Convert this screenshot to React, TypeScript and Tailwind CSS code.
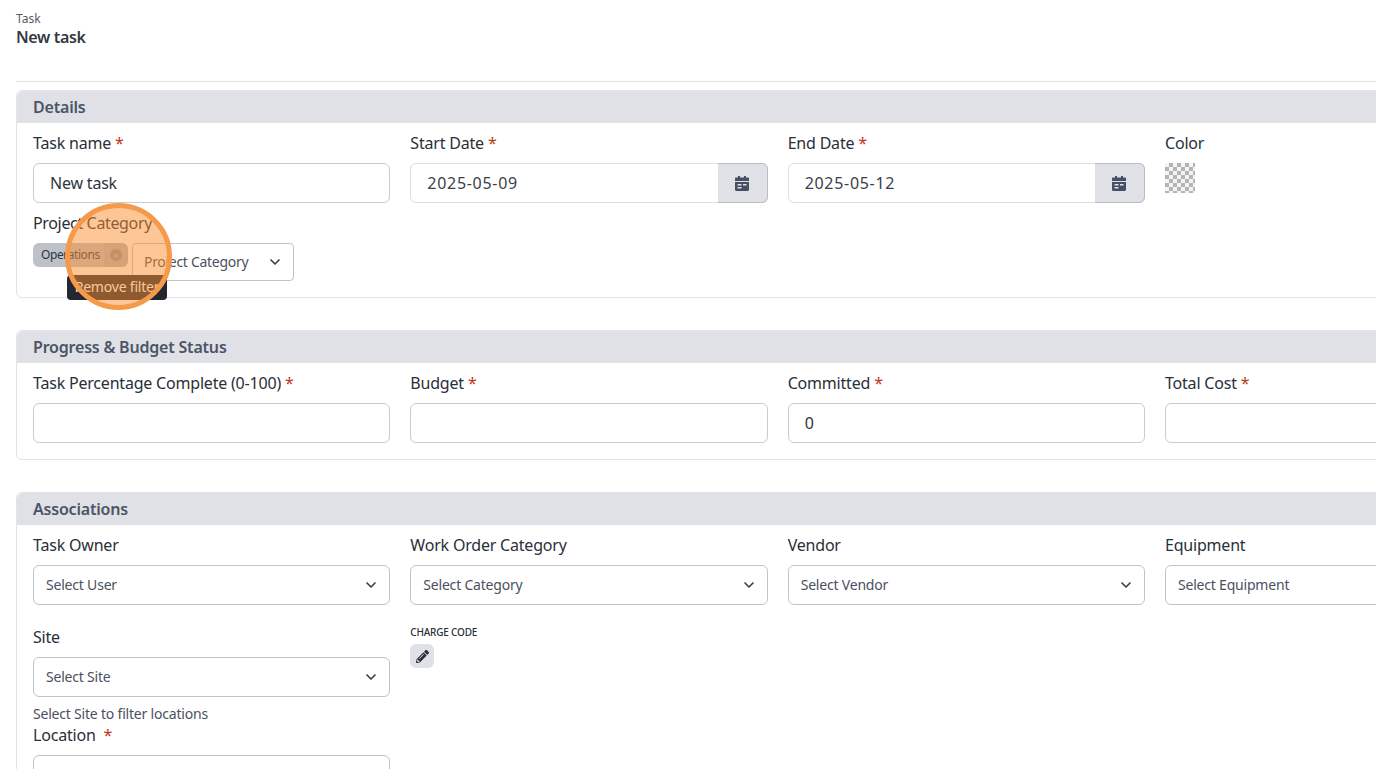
import { ChevronDown } from 'lucide-react';
import { FaPencilAlt } from 'react-icons/fa';

function CalendarIcon() {
  return (
    <svg viewBox="0 0 14 15" className="h-[15px] w-[14px] text-[#475063]" fill="currentColor">
      <rect x="3" y="0" width="2" height="3" />
      <rect x="9" y="0" width="2" height="3" />
      <path d="M1 1.5h12a1 1 0 0 1 1 1V5H0V2.500a1 1 0 0 1 1-1z" />
      <path
        fillRule="evenodd"
        d="M0 6h14v7.500a1.500 1.500 0 0 1-1.500 1.500h-11A1.500 1.500 0 0 1 0 13.500V6zm2.500 2v1.500h4V8h-4zm5.500 0v1.500h3.500V8H8zm-5.500 3v1.500h4V11h-4z"
      />
    </svg>
  );
}

function Label({ text, required, wide }: { text: string; required?: boolean; wide?: boolean }) {
  return (
    <div className="h-5 text-[16px] leading-5 text-[#2a2f38]">
      {text}
      {required && <span className={wide ? 'ml-2 text-[#b5391c]' : 'ml-1 text-[#b5391c]'}>*</span>}
    </div>
  );
}

function TextField({ label, value, required }: { label: string; value?: string; required?: boolean }) {
  return (
    <div>
      <Label text={label} required={required} />
      <div className="mt-2.5 flex h-10 items-center rounded-md border border-[#c9ccd1] bg-white px-4 text-[16px] text-[#2f343d]">
        {value}
      </div>
    </div>
  );
}

function DateField({ label, value }: { label: string; value: string }) {
  return (
    <div>
      <Label text={label} required />
      <div className="mt-2.5 flex h-10 rounded-md border border-[#dcdee2] bg-white">
        <div className="flex flex-1 items-center px-4 text-[16px] tracking-[0.7px] text-[#3a3f48]">{value}</div>
        <div className="-my-px -mr-px flex w-[50px] items-center justify-center rounded-r-md border border-l-0 border-[#b9bcc3] bg-[#dfe1e6]">
          <CalendarIcon />
        </div>
      </div>
    </div>
  );
}

function SelectField({ label, placeholder, required }: { label: string; placeholder: string; required?: boolean }) {
  return (
    <div>
      <Label text={label} required={required} />
      <div className="mt-2.5 flex h-10 items-center justify-between rounded-md border border-[#c0c3c9] bg-white pl-3 pr-2.5 text-[14px] text-[#4b5160]">
        <span className="-mt-0.5">{placeholder}</span>
        <ChevronDown className="h-4 w-4 text-[#3a3f48]" strokeWidth={2.5} />
      </div>
    </div>
  );
}

function Card({ title, children }: { title: string; children: React.ReactNode }) {
  return (
    <section className="rounded-md border border-[#e2e4e8] bg-white">
      <div className="flex h-8 items-center rounded-t-md bg-[#dfe1e6] px-4 text-[16px] font-semibold text-[#4b5565]">
        {title}
      </div>
      <div className="px-4 pt-2.5">{children}</div>
    </section>
  );
}

export default function App() {
  return (
    <div className="relative h-[769px] w-[1376px] overflow-hidden bg-white font-['Noto_Sans','Open_Sans',sans-serif] tracking-[-0.2px]">
      <div className="w-[1539.33px] pl-4">
        <div className="pt-[11px]">
          <div className="text-[12px] leading-[16px] tracking-normal text-[#555b66]">Task</div>
          <div className="text-[16px] font-semibold leading-[20px] tracking-[-0.35px] text-[#333a45]">New task</div>
        </div>
        <div className="mt-[34px] border-t border-[#dfe1e5]" />

        <div className="mt-2">
          <Card title="Details">
            <div className="grid grid-cols-4 gap-x-5">
              <TextField label="Task name" value="New task" required />
              <DateField label="Start Date" value="2025-05-09" />
              <DateField label="End Date" value="2025-05-12" />
              <div>
                <Label text="Color" />
                <div className="mt-2.5 h-[30px] w-[30px] bg-[repeating-conic-gradient(#b4b4b4_0%_25%,#f4f4f4_0%_50%)] bg-[length:8px_8px]" />
              </div>
            </div>
            <div className="mt-2.5 pb-4">
              <div className="tracking-[-0.35px]">
                <Label text="Project Category" />
              </div>
              <div className="mt-2.5 flex items-start gap-1">
                <div className="flex h-6 w-[95px] items-center justify-between rounded-md bg-[#bcc1ca] pl-2 text-[12px] tracking-[-0.4px] text-[#2f343d]">
                  Operations
                  <div className="flex h-6 w-6 items-center justify-center rounded-r-md bg-[#b3b7c0]">
                    <div className="flex h-3 w-3 items-center justify-center rounded-full bg-[#8f939b] text-[9px] leading-none text-[#c6cad1]">
                      ×
                    </div>
                  </div>
                </div>
                <div className="flex h-[38px] w-[162px] items-center justify-between rounded border border-[#c0c3c9] bg-white pl-[11px] pr-2.5 text-[14px] tracking-[-0.3px] text-[#4b5160]">
                  <span className="-mt-0.5">Project Category</span>
                  <ChevronDown className="h-4 w-4 text-[#3a3f48]" strokeWidth={2.5} />
                </div>
              </div>
            </div>
          </Card>
        </div>

        <div className="mt-8">
          <Card title="Progress & Budget Status">
            <div className="grid grid-cols-4 gap-x-5 pb-4">
              <TextField label="Task Percentage Complete (0-100)" required />
              <TextField label="Budget" required />
              <TextField label="Committed" value="0" required />
              <TextField label="Total Cost" required />
            </div>
          </Card>
        </div>

        <div className="mt-8">
          <Card title="Associations">
            <div className="grid grid-cols-4 gap-x-5">
              <SelectField label="Task Owner" placeholder="Select User" />
              <SelectField label="Work Order Category" placeholder="Select Category" />
              <SelectField label="Vendor" placeholder="Select Vendor" />
              <SelectField label="Equipment" placeholder="Select Equipment" />
            </div>
            <div className="mt-[22px] grid grid-cols-4 gap-x-5">
              <div>
                <SelectField label="Site" placeholder="Select Site" />
                <div className="mt-2 text-[14px] leading-[18px] text-[#4b5160]">Select Site to filter locations</div>
                <div className="mt-0.5">
                  <Label text="Location" required wide />
                </div>
                <div className="mt-2.5 h-10 rounded-md border border-[#c0c3c9] bg-white" />
              </div>
              <div>
                <div className="-mt-px text-[10px] font-medium leading-[12px] text-[#2a2f38]">CHARGE CODE</div>
                <div className="mt-1.5 flex h-6 w-6 items-center justify-center rounded-md bg-[#dfe1e6]">
                  <FaPencilAlt className="h-[13px] w-[13px] text-[#2a2f38]" />
                </div>
              </div>
            </div>
          </Card>
        </div>
      </div>

      <div className="absolute left-[67px] top-[275px] flex h-[25px] w-[100px] items-center justify-center rounded-sm bg-[#23272e] pb-0.5 text-[14px] text-white">
        Remove filter
      </div>
      <div className="absolute left-[65px] top-[203px] h-[107px] w-[107px] rounded-full border-[5px] border-[#f5994a] bg-[#f98e2e]/50" />
    </div>
  );
}
